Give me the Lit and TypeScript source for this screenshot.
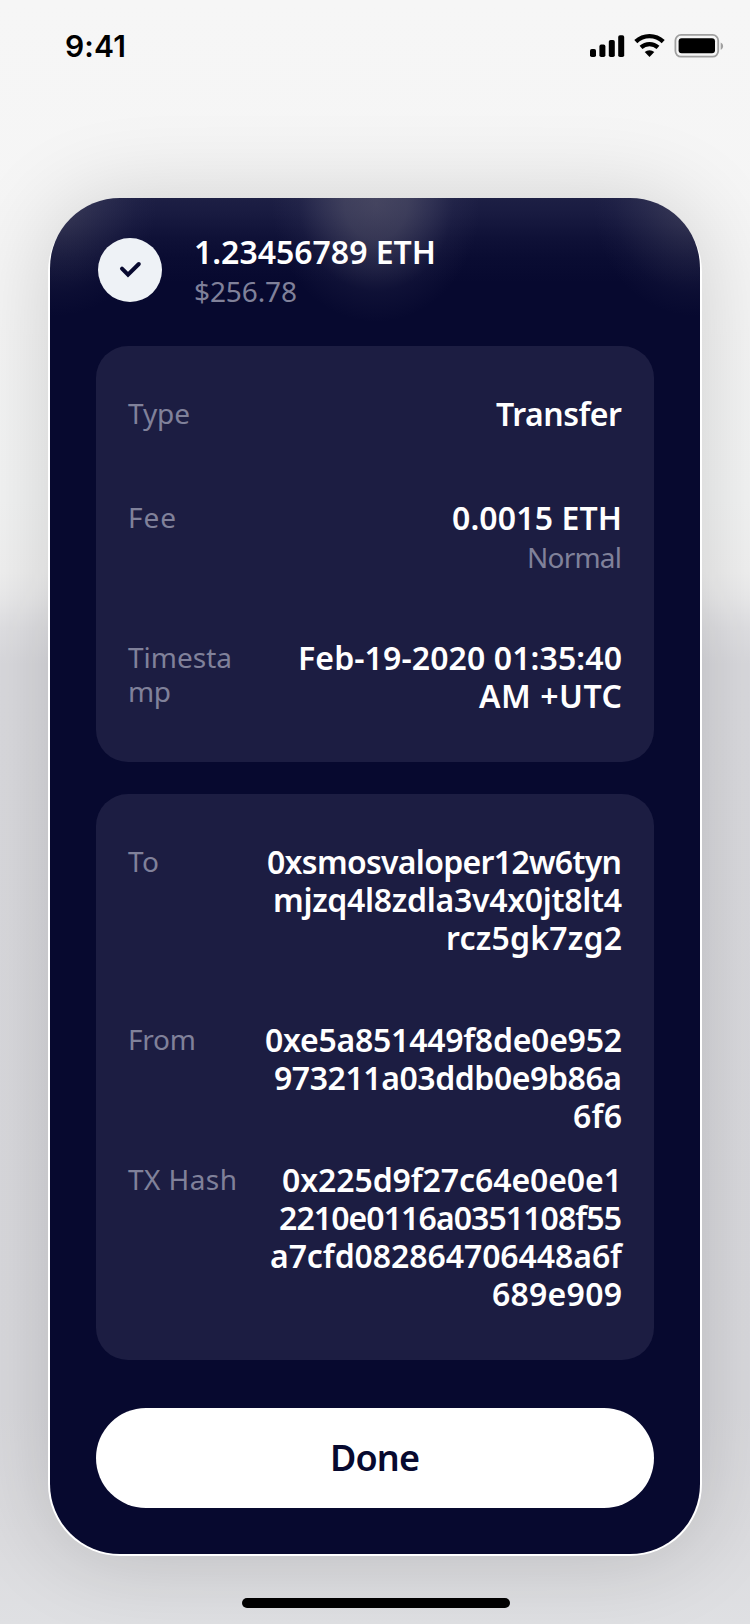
import { LitElement, html, css } from "lit";
import { customElement, property } from "lit/decorators.js";

/** One line of text, tracked so that its glyphs span a given width. */
@customElement("fit-line")
class FitLine extends LitElement {
  @property() text = "";
  @property({ type: Number }) span = 0;
  static styles = css`
    :host { display: block; white-space: pre; }
    .run { display: inline-block; }
  `;
  firstUpdated() {
    const el = this.renderRoot.querySelector(".run") as HTMLElement;
    const n = this.text.length;
    const ls = (this.span - el.getBoundingClientRect().width) / (n - 1);
    el.style.letterSpacing = `${ls}px`;
    el.style.marginRight = `${-ls}px`;
  }
  render() {
    return html`<span class="run">${this.text}</span>`;
  }
}

type Line = [string, number];
interface Row { label: Line[]; value: Line[]; note?: Line; tight?: boolean }

const DETAILS: Row[] = [
  { label: [["Type", 62]], value: [["Transfer", 126]] },
  { label: [["Fee", 48]], value: [["0.0015 ETH", 170]], note: ["Normal", 95] },
  {
    label: [["Timesta", 104], ["mp", 43]],
    value: [["Feb-19-2020 01:35:40", 324], ["AM +UTC", 143]],
  },
];

const ADDRESSES: Row[] = [
  {
    label: [["To", 31]],
    value: [["0xsmosvaloper12w6tyn", 355], ["mjzq4l8zdla3v4x0jt8lt4", 349], ["rcz5gk7zg2", 176]],
  },
  {
    label: [["From", 68]],
    value: [["0xe5a851449f8de0e952", 357], ["973211a03ddb0e9b86a", 348], ["6f6", 49]],
  },
  {
    label: [["TX Hash", 109]],
    value: [["0x225d9f27c64e0e0e1", 340], ["2210e0116a0351108f55", 343], ["a7cfd082864706448a6f", 352], ["689e909", 130]],
    tight: true,
  },
];

const line = ([text, span]: Line) => html`<fit-line .text=${text} .span=${span}></fit-line>`;

@customElement("app-root")
class AppRoot extends LitElement {
  static styles = css`
    :host {
      display: block;
      width: 750px;
      height: 1624px;
      font-family: "Noto Sans", "Open Sans", sans-serif;
      color: #fff;
    }
    .screen {
      box-sizing: border-box;
      height: 1624px;
      display: flex;
      flex-direction: column;
      align-items: center;
      overflow: hidden;
      background: linear-gradient(#f6f6f6 0, #f5f5f5 300px, #f3f4f4 500px, #f1f1f1 572px, #ececed 596px, #e1e1e4 628px, #dadade 664px, #d9d9dd 1400px, #dcdcdf 1540px, #dfe0e3 1624px);
    }
    .status {
      box-sizing: border-box;
      width: 100%;
      height: 200px;
      flex: none;
      display: flex;
      justify-content: space-between;
      align-items: flex-start;
      padding: 28px 25px 0 65px;
      color: #000;
      font: 600 30px/36px Inter, sans-serif;
    }
    .frame {
      flex: none;
      padding: 0 2px 2px;
      border-radius: 72px;
      background: #fff;
      box-shadow: 0 0 90px rgba(0, 0, 0, 0.16);
    }
    .card {
      box-sizing: border-box;
      width: 650px;
      height: 1356px;
      margin-top: -2px;
      padding: 35px 46px 46px;
      border-radius: 70px;
      display: flex;
      flex-direction: column;
      background:
        radial-gradient(ellipse 104px 118px at 326px 6px, rgba(125, 122, 135, 0.42), rgba(122, 120, 135, 0.37) 30%, rgba(115, 114, 135, 0.24) 52%, rgba(95, 95, 125, 0.09) 74%, transparent),
        radial-gradient(ellipse 100px 110px at 6px 8px, rgba(120, 118, 130, 0.34), rgba(110, 110, 130, 0.16) 50%, rgba(95, 95, 125, 0.05) 80%, transparent),
        radial-gradient(ellipse 100px 110px at 644px 8px, rgba(120, 118, 130, 0.34), rgba(110, 110, 130, 0.16) 50%, rgba(95, 95, 125, 0.05) 80%, transparent),
        linear-gradient(#1d1f44 0, #191b41 14px, #0f1137 40px, #0a0c32 60px, #07092f 84px, #07092f 100%);
    }
    .head { display: flex; gap: 32px; padding-left: 2px; margin-bottom: 38px; }
    .badge { width: 64px; height: 64px; margin-top: 5px; }
    .strong { font-size: 32px; line-height: 38px; font-weight: 600; }
    .soft { font-size: 28px; line-height: 34px; font-weight: 400; color: #80819a; }
    .sub { margin-top: 3px; }
    .panel {
      padding: 49px 32px 47px;
      border-radius: 32px;
      background: #1c1d42;
      display: flex;
      flex-direction: column;
    }
    .panel + .panel { margin-top: 32px; }
    .row { display: flex; justify-content: space-between; min-height: 40px; }
    .row + .row { margin-top: 64px; }
    .value .sub { margin-bottom: 1px; }
    .row + .row.tight { margin-top: 26px; }
    .label { padding-top: 1px; }
    .value { text-align: right; }
    .done {
      height: 100px;
      margin: 48px 0 0;
      padding: 0;
      border: 0;
      border-radius: 50px;
      background: #fff;
      color: #07092f;
      font: 600 36px/100px "Noto Sans", sans-serif;
    }
    .home { flex: none; width: 268px; height: 10px; margin: 42px 0 0 2px; border-radius: 5px; background: #000; }
  `;

  private row(r: Row) {
    return html`<div class="row ${r.tight ? "tight" : ""}">
      <div class="label soft">${r.label.map(line)}</div>
      <div class="value">
        <div class="strong">${r.value.map(line)}</div>
        ${r.note ? html`<div class="soft sub">${line(r.note)}</div>` : ""}
      </div>
    </div>`;
  }

  render() {
    return html`<div class="screen">
      <div class="status">
        ${line(["9:41", 61])}
        <svg width="136" height="36" viewBox="589 28 136 36">
          <rect x="590" y="49" width="6" height="8" rx="1.8" />
          <rect x="599.4" y="44.6" width="6" height="12.4" rx="1.8" />
          <rect x="608.8" y="40" width="6" height="17" rx="1.8" />
          <rect x="618.2" y="35.2" width="6" height="21.8" rx="1.8" />
          <g fill="none" stroke="#000">
            <path d="M635.8 41.6a20 20 0 0 1 27.4 0" stroke-width="4.4" />
            <path d="M641 47.4a12.6 12.6 0 0 1 17 0" stroke-width="4.2" />
          </g>
          <path d="M649.5 57l-4.8-4.9a7.2 7.2 0 0 1 9.6 0z" />
          <rect x="675.4" y="34.9" width="42.8" height="21.8" rx="5.6" fill="none" stroke="#a0a0a0" stroke-width="1.8" />
          <rect x="678.6" y="38.3" width="36.4" height="15" rx="3" />
          <path d="M720.7 42.4c3.2 1.4 3.2 5.8 0 7.4z" fill="#a0a0a0" />
        </svg>
      </div>
      <div class="frame">
        <div class="card">
          <div class="head">
            <svg class="badge" viewBox="0 0 64 64">
              <circle cx="32" cy="32" r="32" fill="#eef2f6" />
              <path d="M24 30.7l6 6L40.8 26" fill="none" stroke="#07092f" stroke-width="4" stroke-linecap="round" />
            </svg>
            <div>
              <div class="strong">${line(["1.23456789 ETH", 242])}</div>
              <div class="soft sub">${line(["$256.78", 103])}</div>
            </div>
          </div>
          <div class="panel">${DETAILS.map((r) => this.row(r))}</div>
          <div class="panel">${ADDRESSES.map((r) => this.row(r))}</div>
          <button class="done">${line(["Done", 90])}</button>
        </div>
      </div>
      <div class="home"></div>
    </div>`;
  }
}
